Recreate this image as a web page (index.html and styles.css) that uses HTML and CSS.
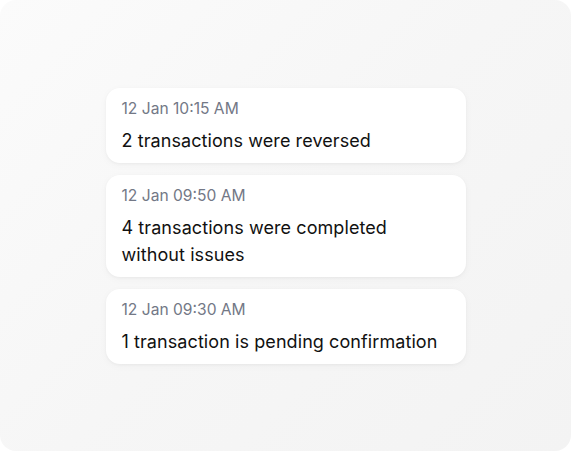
FILE: index.html
```html
<!DOCTYPE html>
<html>
<head>
<meta charset="utf-8">
<link rel="stylesheet" href="styles.css">
</head>
<body>
<div class="stage">
  <div class="list">
    <div class="card">
      <div class="time">12 Jan 10:15 AM</div>
      <div class="msg">2 transactions were reversed</div>
    </div>
    <div class="card">
      <div class="time">12 Jan 09:50 AM</div>
      <div class="msg">4 transactions were completed<br>without issues</div>
    </div>
    <div class="card">
      <div class="time">12 Jan 09:30 AM</div>
      <div class="msg">1 transaction is pending confirmation</div>
    </div>
  </div>
</div>
</body>
</html>
```
FILE: styles.css
```css
html, body {
  margin: 0;
  padding: 0;
  background: #ffffff;
}
body {
  font-family: Inter, "Noto Sans", sans-serif;
}
.stage {
  width: 571px;
  height: 451px;
  box-sizing: border-box;
  border-radius: 16px;
  background: linear-gradient(135deg, #fbfbfb 0%, #f6f6f6 50%, #f3f3f3 100%);
  display: flex;
  align-items: center;
  justify-content: center;
}
.list {
  width: 360px;
  display: flex;
  flex-direction: column;
  gap: 12px;
}
.card {
  background: #ffffff;
  border-radius: 14px;
  padding: 11px 16px 9px;
  box-shadow: 0 1px 3px rgba(0,0,0,0.04), 0 2px 8px rgba(0,0,0,0.03);
}
.time {
  font-size: 15.6px;
  line-height: 20px;
  color: #737886;
}
.msg {
  margin-top: 8px;
  font-size: 18px;
  line-height: 27px;
  letter-spacing: 0.08px;
  color: #111111;
}
```
